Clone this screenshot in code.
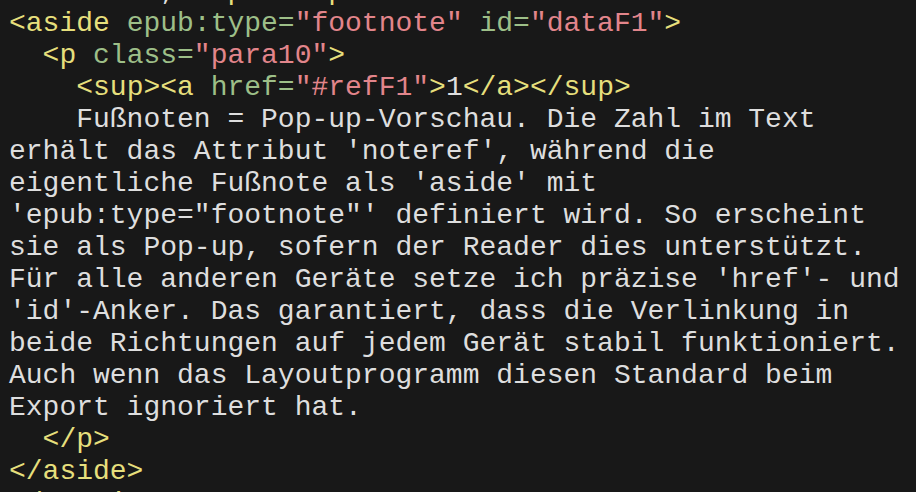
import React from "react";

const Y = ({ children }: { children: React.ReactNode }) => <span className="text-[#e6df7c]">{children}</span>;
const G = ({ children }: { children: React.ReactNode }) => <span className="text-[#9dbf88]">{children}</span>;
const R = ({ children }: { children: React.ReactNode }) => <span className="text-[#e2858b]">{children}</span>;

const Line = ({ children }: { children?: React.ReactNode }) => (
  <div className="h-[32px] whitespace-pre">{children}</div>
);

export default function App() {
  return (
    <div className="w-[916px] h-[492px] overflow-hidden bg-[#181818]">
      <div
        className="-mt-[24px] pl-[9px] text-[28px] leading-[32px] text-[#dedede]"
        style={{ fontFamily: '"Liberation Mono", monospace' }}
      >
        <Line>
          {"    nicht, "}
          <Y>{"</p>"}</Y>
          {"   "}
          <Y>{"<p>"}</Y>
        </Line>
        <Line>
          <Y>{"<aside "}</Y>
          <G>{"epub:type="}</G>
          <R>{'"footnote"'}</R>
          <G>{" id="}</G>
          <R>{'"dataF1"'}</R>
          <Y>{">"}</Y>
        </Line>
        <Line>
          {"  "}
          <Y>{"<p "}</Y>
          <G>{"class="}</G>
          <R>{'"para10"'}</R>
          <Y>{">"}</Y>
        </Line>
        <Line>
          {"    "}
          <Y>{"<sup><a "}</Y>
          <G>{"href="}</G>
          <R>{'"#refF1"'}</R>
          <Y>{">"}</Y>
          {"1"}
          <Y>{"</a></sup>"}</Y>
        </Line>
        <Line>{"    Fußnoten = Pop-up-Vorschau. Die Zahl im Text"}</Line>
        <Line>{"erhält das Attribut 'noteref', während die"}</Line>
        <Line>{"eigentliche Fußnote als 'aside' mit"}</Line>
        <Line>{"'epub:type=\"footnote\"' definiert wird. So erscheint"}</Line>
        <Line>{"sie als Pop-up, sofern der Reader dies unterstützt."}</Line>
        <Line>{"Für alle anderen Geräte setze ich präzise 'href'- und"}</Line>
        <Line>{"'id'-Anker. Das garantiert, dass die Verlinkung in"}</Line>
        <Line>{"beide Richtungen auf jedem Gerät stabil funktioniert."}</Line>
        <Line>{"Auch wenn das Layoutprogramm diesen Standard beim"}</Line>
        <Line>{"Export ignoriert hat."}</Line>
        <Line>
          {"  "}
          <Y>{"</p>"}</Y>
        </Line>
        <Line>
          <Y>{"</aside>"}</Y>
        </Line>
        <Line>
          <Y>{"</section>"}</Y>
        </Line>
      </div>
    </div>
  );
}
